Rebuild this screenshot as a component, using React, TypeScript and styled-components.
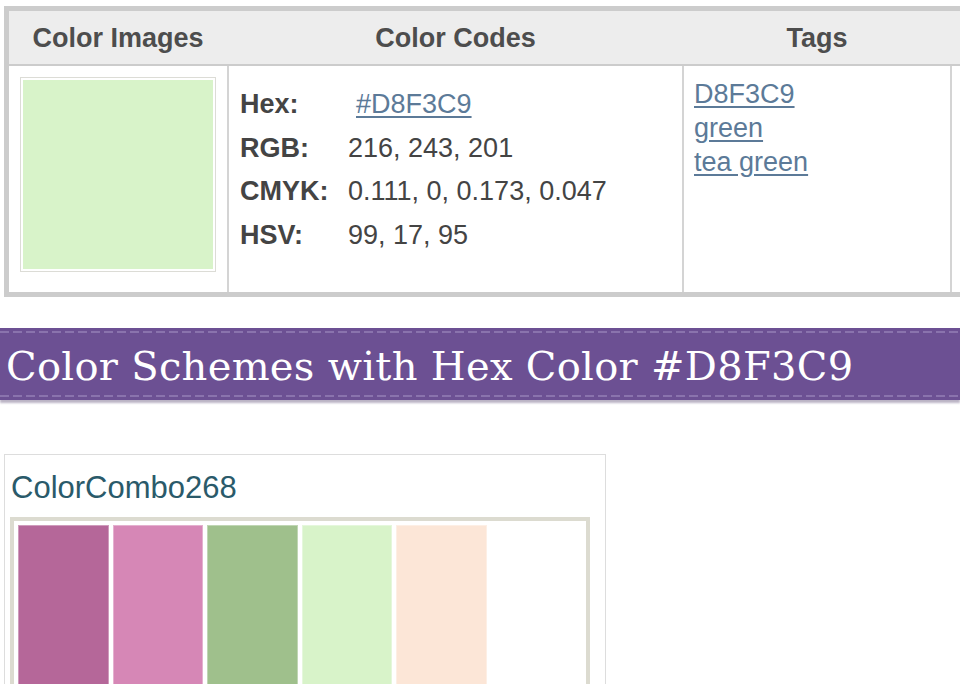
import styled, { createGlobalStyle } from 'styled-components';

const GlobalStyle = createGlobalStyle`
  html, body {
    margin: 0;
    padding: 0;
    background: #fff;
    overflow: hidden;
  }
  body {
    font-family: "Liberation Sans", Arial, sans-serif;
  }
`;

const Page = styled.div`
  width: 960px;
  padding-top: 6px;
`;

const Table = styled.div`
  display: grid;
  grid-template-columns: 218px 2px 453px 2px 266px 2px 200px;
  grid-template-rows: 53px 2px 226px;
  width: 1143px;
  margin-left: 4px;
  border: 5px solid #cccccc;
  border-right: none;
`;

const HeadCell = styled.div`
  background: #ededed;
  color: #4d4d4d;
  font-weight: bold;
  font-size: 27px;
  line-height: 55px;
  text-align: center;
`;

const HeadLine = styled.div`
  grid-column: 1 / -1;
  background: #cccccc;
`;

const ColLine = styled.div`
  background: #d4d4d4;
`;

const ImageCell = styled.div`
  padding: 11px;
`;

const Swatch = styled.div<{ $color: string }>`
  width: 190px;
  height: 189px;
  padding: 2px;
  border: 1px solid #dcdcd6;
  background: ${p => p.$color};
  background-clip: content-box;
`;

const CodesCell = styled.div`
  padding: 17px 11px 0;
  display: grid;
  grid-template-columns: 108px 1fr;
  grid-auto-rows: 43.5px;
  align-items: center;
  font-size: 27px;
  color: #444;
`;

const Label = styled.span`
  font-weight: bold;
`;

const Value = styled.span``;

const Link = styled.a<{ $indent?: boolean }>`
  color: #5c7a98;
  text-decoration: underline;
  text-underline-offset: 3px;
  ${p => p.$indent && 'margin-left: 8px;'}
`;

const TagsCell = styled.div`
  padding: 11px 10px 0;
  display: flex;
  flex-direction: column;
  align-items: flex-start;
  font-size: 27px;
  line-height: 34px;
`;

const Banner = styled.div`
  position: relative;
  margin-top: 31px;
  height: 72px;
  background: #6c5093;
  box-shadow: 0 3px 2px rgba(60, 40, 90, 0.35);
  display: flex;
  align-items: center;
  padding: 4px 0 0 6px;
  box-sizing: border-box;

  &::before, &::after {
    content: '';
    position: absolute;
    left: 0;
    right: 0;
    height: 2px;
    background: repeating-linear-gradient(90deg, #8a73ad 0 9px, transparent 9px 13px);
  }
  &::before { top: 3px; }
  &::after { bottom: 3px; }
`;

const BannerTitle = styled.h2`
  margin: 0;
  color: #fff;
  font-family: "DejaVu Serif", "Liberation Serif", serif;
  font-weight: normal;
  font-size: 40px;
  letter-spacing: 0.3px;
  white-space: nowrap;
`;

const ComboCard = styled.div`
  margin: 54px 0 0 4px;
  width: 595px;
  height: 260px;
  border: 1px solid #dddddd;
  padding: 16px 0 0 5px;
`;

const ComboTitle = styled.div`
  font-size: 31px;
  color: #2a5a6a;
  line-height: 34px;
  padding-left: 1px;
`;

const Palette = styled.div`
  margin-top: 12px;
  width: 568px;
  height: 200px;
  border: 4px solid #dcdbd0;
  padding: 4px 0 0 4px;
  display: flex;
  gap: 4px;
  background: #fff;
`;

const Chip = styled.div<{ $color: string }>`
  width: 90.5px;
  height: 100%;
  background: ${p => p.$color};
  border: 1px solid rgba(255, 255, 255, 0.35);
  box-sizing: border-box;
`;

const codes = [
  { label: 'Hex:', value: '#D8F3C9', link: true },
  { label: 'RGB:', value: '216, 243, 201' },
  { label: 'CMYK:', value: '0.111, 0, 0.173, 0.047' },
  { label: 'HSV:', value: '99, 17, 95' },
];

const tags = ['D8F3C9', 'green', 'tea green'];

const combo = ['#b56799', '#d687b6', '#9fc08c', '#d8f3c9', '#fce6d7'];

export default function App() {
  return (
    <Page>
      <GlobalStyle />
      <Table>
        <HeadCell>Color Images</HeadCell>
        <HeadCell />
        <HeadCell>Color Codes</HeadCell>
        <HeadCell />
        <HeadCell>Tags</HeadCell>
        <HeadCell />
        <HeadCell />
        <HeadLine />
        <ImageCell>
          <Swatch $color="#D8F3C9" />
        </ImageCell>
        <ColLine />
        <CodesCell>
          {codes.map(c => (
            <>
              <Label key={c.label}>{c.label}</Label>
              {c.link ? <Link href="#" $indent>{c.value}</Link> : <Value>{c.value}</Value>}
            </>
          ))}
        </CodesCell>
        <ColLine />
        <TagsCell>
          {tags.map(t => <Link key={t} href="#">{t}</Link>)}
        </TagsCell>
        <ColLine />
        <div />
      </Table>

      <Banner>
        <BannerTitle>Color Schemes with Hex Color #D8F3C9</BannerTitle>
      </Banner>

      <ComboCard>
        <ComboTitle>ColorCombo268</ComboTitle>
        <Palette>
          {combo.map(c => <Chip key={c} $color={c} />)}
        </Palette>
      </ComboCard>
    </Page>
  );
}
